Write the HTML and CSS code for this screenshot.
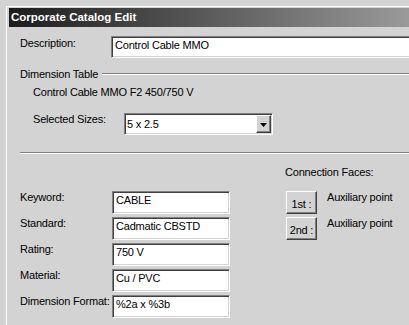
FILE: index.html
```html
<!DOCTYPE html>
<html>
<head>
<meta charset="utf-8">
<link rel="stylesheet" href="styles.css">
</head>
<body>
<div class="window">
  <div class="titlebar">Corporate Catalog Edit</div>
  <div class="content">
    <div class="desc-row">
      <div class="label desc-label">Description:</div>
      <div class="field desc-field">Control Cable MMO</div>
    </div>
    <div class="group-head"><span>Dimension Table</span><div class="groove head-line"></div></div>
    <div class="dim-name">Control Cable MMO F2 450/750 V</div>
    <div class="sizes-row">
      <div class="label sizes-label">Selected Sizes:</div>
      <div class="field select">
        <span class="select-text">5 x 2.5</span>
        <span class="drop-btn"><svg width="7" height="4" viewBox="0 0 7 4"><polygon points="0,0 7,0 3.5,4" fill="#000"/></svg></span>
      </div>
    </div>
    <div class="groove sep"></div>
    <div class="props">
      <div class="faces-head">Connection Faces:</div>
      <div class="label">Keyword:</div>
      <div class="field prop-field">CABLE</div>
      <div class="btn">1st :</div>
      <div class="aux">Auxiliary point</div>
      <div class="label">Standard:</div>
      <div class="field prop-field">Cadmatic CBSTD</div>
      <div class="btn">2nd :</div>
      <div class="aux">Auxiliary point</div>
      <div class="label">Rating:</div>
      <div class="field prop-field">750 V</div>
      <div class="empty"></div>
      <div class="empty"></div>
      <div class="label">Material:</div>
      <div class="field prop-field">Cu / PVC</div>
      <div class="empty"></div>
      <div class="empty"></div>
      <div class="label">Dimension Format:</div>
      <div class="field prop-field">%2a x %3b</div>
    </div>
  </div>
</div>
</body>
</html>
```
FILE: styles.css
```css
html, body {
  margin: 0;
  padding: 0;
}
body {
  background: #d3d3d3;
  font-family: "Liberation Sans", Arial, sans-serif;
  font-size: 11px;
  color: #000;
  letter-spacing: -0.2px;
  width: 409px;
  height: 325px;
  overflow: hidden;
}
.window {
  margin: 6px 0 0 6px;
  width: 403px;
  height: 319px;
  overflow: hidden;
  border-top: 1px solid #fff;
  border-left: 1px solid #fff;
  padding: 1px 0 0 2px;
  box-sizing: border-box;
}
.titlebar {
  height: 19px;
  line-height: 19px;
  padding-left: 2px;
  color: #fff;
  font-weight: bold;
  font-size: 11.5px;
  letter-spacing: 0;
  background: linear-gradient(to right, #1c1c1c 0, #9a9a9a 100%);
  white-space: nowrap;
}
.content {
  padding-left: 11px;
}
.label {
  line-height: 13px;
  white-space: nowrap;
}
.field {
  background: #fff;
  border: 1px solid;
  border-color: #808080 #fff #fff #808080;
  box-shadow: inset 1px 1px 0 #404040, inset -1px -1px 0 #d3d3d3;
  box-sizing: border-box;
  padding: 2px 3px 0;
  line-height: 13px;
  white-space: nowrap;
}
.desc-row {
  display: flex;
  margin-top: 9px;
  margin-right: -24px;
}
.desc-label {
  width: 91px;
  padding-top: 1px;
}
.desc-field {
  flex: 1;
  height: 22px;
}
.group-head {
  display: flex;
  margin-top: 10px;
  line-height: 13px;
}
.groove {
  height: 0;
  border-top: 1px solid #808080;
  border-bottom: 1px solid #fff;
}
.head-line {
  flex: 1;
  margin: 5px 0 0 4px;
}
.dim-name {
  margin-top: 5px;
  padding-left: 13px;
  line-height: 13px;
}
.sizes-row {
  display: flex;
  margin-top: 14px;
  padding-left: 13px;
}
.sizes-label {
  width: 91px;
}
.select {
  width: 149px;
  height: 22px;
  padding: 1px;
  display: flex;
  align-items: stretch;
}
.select-text {
  flex: 1;
  padding-left: 1px;
  line-height: 13px;
  align-self: center;
}
.drop-btn {
  width: 15px;
  box-sizing: border-box;
  background: #d3d3d3;
  border: 1px solid;
  border-color: #fff #404040 #404040 #fff;
  box-shadow: inset -1px -1px 0 #808080;
  display: flex;
  align-items: center;
  justify-content: center;
  padding-top: 1px;
}
.drop-btn svg {
  display: block;
}
.sep {
  margin-top: 17px;
}
.props {
  display: grid;
  grid-template-columns: 92px 174px 41px 1fr;
  grid-template-rows: 22px repeat(5, 23px);
  row-gap: 3px;
  margin-top: 12px;
}
.faces-head {
  grid-column: 3 / span 2;
  margin-left: -1px;
  line-height: 13px;
  white-space: nowrap;
}
.faces-head + .label {
  grid-column: 1;
}
.prop-field {
  width: 118px;
}
.btn {
  width: 31px;
  box-sizing: border-box;
  border: 1px solid;
  border-color: #fff #404040 #404040 #fff;
  box-shadow: inset -1px -1px 0 #808080;
  display: flex;
  align-items: center;
  justify-content: center;
  padding-top: 2px;
  white-space: nowrap;
}
.aux {
  line-height: 13px;
  white-space: nowrap;
}
```
